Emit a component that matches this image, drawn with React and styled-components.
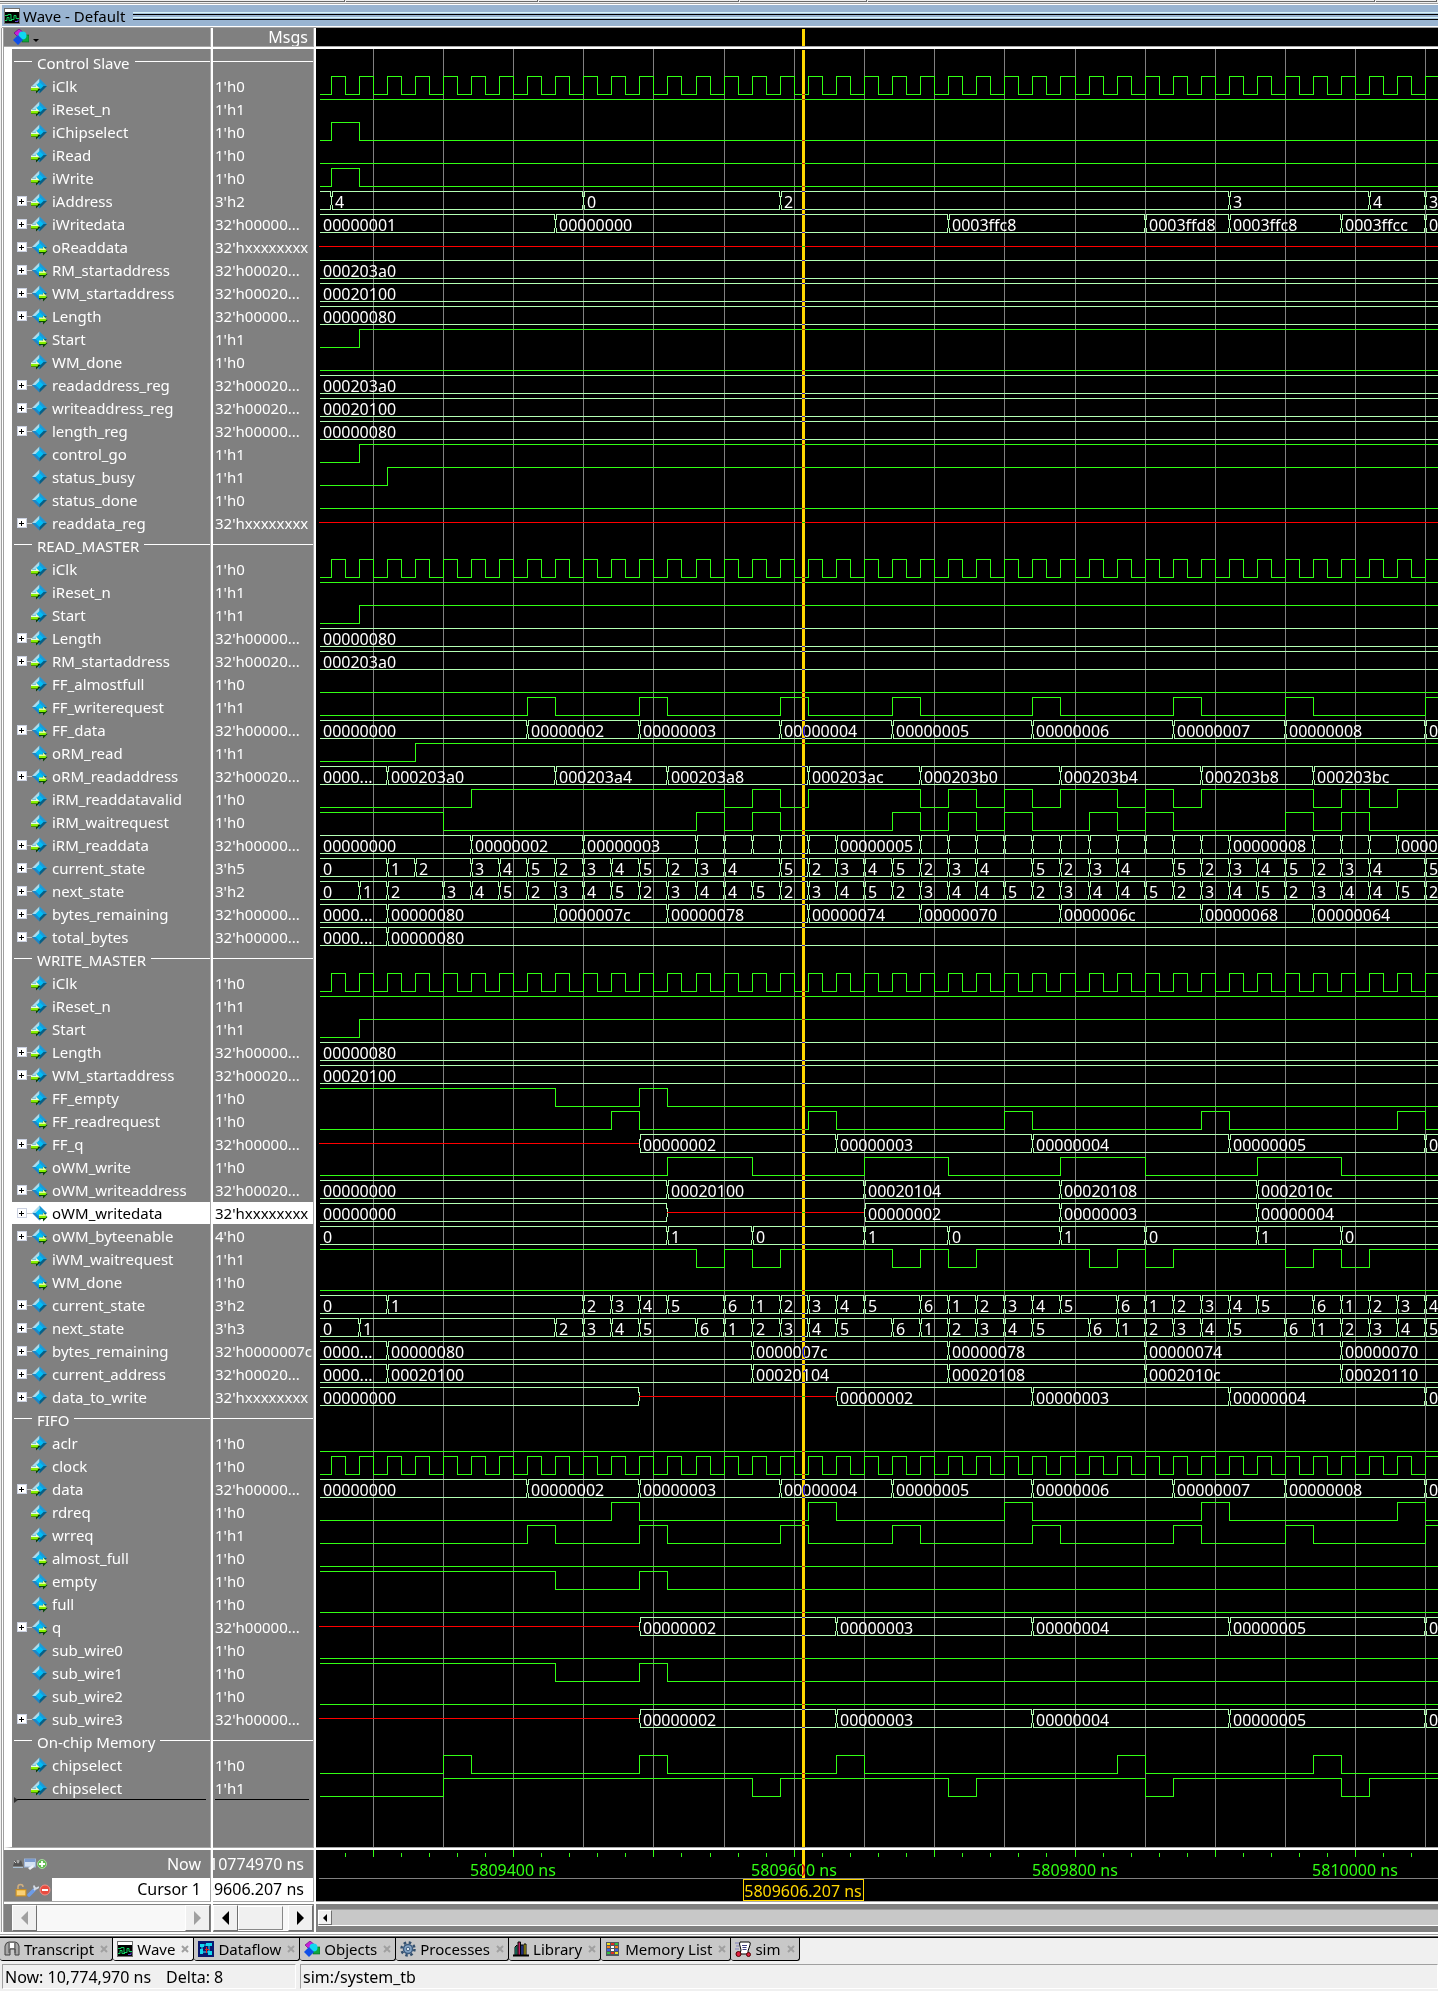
import React from "react";
import styled, { createGlobalStyle, css } from "styled-components";

const GlobalStyle = createGlobalStyle`
  * { box-sizing: border-box; }
  body {
    margin: 0;
    background: #f0f0f0;
    color: #000;
    font: 15px/22px "Noto Sans", "Open Sans", sans-serif;
  }
  button { font: inherit; color: inherit; }
  ul { list-style: none; margin: 0; padding: 0; }
`;

/* ---------- signal data ---------- */

const X = null;

// "a@270 b@290" -> [[start, a], ...]; the first entry has no time
const seq = (first, rest = "") => [
  [null, first],
  ...rest
    .split(" ")
    .filter(Boolean)
    .map((s) => {
      const [v, t] = s.split("@");
      return [Number(t), v === "x" ? X : v];
    }),
];
const bus = (first, rest) => ({ kind: "bus", segs: seq(first, rest) });
// level changes: initial level followed by the toggle times
const bit = (start, ...toggles) => ({ kind: "bit", start, toggles });

const clockEdges = Array.from({ length: 120 }, (_, i) => 270 + i * 10);
const clock = bit(0, ...clockEdges);
const low = bit(0);
const high = bit(1);

const fifoData = bus(
  "00000000",
  "00000002@410 00000003@490 00000004@590 00000005@670 00000006@770 00000007@870 00000008@950 00000009@1050"
);
const writeReq = bit(0, 410, 430, 490, 510, 590, 610, 670, 690, 770, 790, 870, 890, 950, 970, 1050, 1070);
const readReq = bit(0, 470, 490, 610, 630, 750, 770, 890, 910, 1030, 1050);
const fifoEmpty = bit(1, 430, 490, 510);
const fifoQ = bus(X, "00000002@490 00000003@630 00000004@770 00000005@910 00000006@1050");

const group = (name) => ({ name, group: true });
const sig = (name, dir, value, wave, selected) => ({ name, dir, value, wave, selected });

const ROWS = [
  group("Control Slave"),
  sig("iClk", "in", "1'h0", clock),
  sig("iReset_n", "in", "1'h1", high),
  sig("iChipselect", "in", "1'h0", bit(0, 270, 290)),
  sig("iRead", "in", "1'h0", low),
  sig("iWrite", "in", "1'h0", bit(0, 270, 290)),
  sig("iAddress", "in", "3'h2", bus("", "4@270 0@450 2@590 3@910 4@1010 3@1050")),
  sig("iWritedata", "in", "32'h00000...", bus("00000001", "00000000@430 0003ffc8@710 0003ffd8@850 0003ffc8@910 0003ffcc@990 0003ffc8@1050")),
  sig("oReaddata", "out", "32'hxxxxxxxx", bus(X)),
  sig("RM_startaddress", "out", "32'h00020...", bus("000203a0")),
  sig("WM_startaddress", "out", "32'h00020...", bus("00020100")),
  sig("Length", "out", "32'h00000...", bus("00000080")),
  sig("Start", "out", "1'h1", bit(0, 290)),
  sig("WM_done", "in", "1'h0", low),
  sig("readaddress_reg", "", "32'h00020...", bus("000203a0")),
  sig("writeaddress_reg", "", "32'h00020...", bus("00020100")),
  sig("length_reg", "", "32'h00000...", bus("00000080")),
  sig("control_go", "", "1'h1", bit(0, 290)),
  sig("status_busy", "", "1'h1", bit(0, 310)),
  sig("status_done", "", "1'h0", low),
  sig("readdata_reg", "", "32'hxxxxxxxx", bus(X)),
  group("READ_MASTER"),
  sig("iClk", "in", "1'h0", clock),
  sig("iReset_n", "in", "1'h1", high),
  sig("Start", "in", "1'h1", bit(0, 290)),
  sig("Length", "in", "32'h00000...", bus("00000080")),
  sig("RM_startaddress", "in", "32'h00020...", bus("000203a0")),
  sig("FF_almostfull", "in", "1'h0", low),
  sig("FF_writerequest", "out", "1'h1", writeReq),
  sig("FF_data", "out", "32'h00000...", fifoData),
  sig("oRM_read", "out", "1'h1", bit(0, 330)),
  sig("oRM_readaddress", "out", "32'h00020...", bus("0000...", "000203a0@310 000203a4@430 000203a8@510 000203ac@610 000203b0@690 000203b4@790 000203b8@890 000203bc@970")),
  sig("iRM_readdatavalid", "in", "1'h0", bit(0, 370, 550, 570, 590, 610, 690, 710, 730, 750, 770, 790, 830, 850, 870, 890, 970, 990, 1010, 1030)),
  sig("iRM_waitrequest", "in", "1'h0", bit(1, 350, 530, 550, 570, 590, 670, 690, 710, 730, 750, 770, 810, 830, 850, 870, 950, 970, 990, 1010)),
  sig("iRM_readdata", "in", "32'h00000...", bus("00000000", "00000002@370 00000003@450 @530 @550 @570 @590 @610 00000005@630 @690 @710 @730 @750 @770 @790 @810 @830 @850 @870 @890 00000008@910 @970 @990 @1010 00000009@1030")),
  sig("current_state", "", "3'h5", bus("0", "1@310 2@330 3@370 4@390 5@410 2@430 3@450 4@470 5@490 2@510 3@530 4@550 5@590 2@610 3@630 4@650 5@670 2@690 3@710 4@730 5@770 2@790 3@810 4@830 5@870 2@890 3@910 4@930 5@950 2@970 3@990 4@1010 5@1050")),
  sig("next_state", "", "3'h2", bus("0", "1@290 2@310 3@350 4@370 5@390 2@410 3@430 4@450 5@470 2@490 3@510 4@530 4@550 5@570 2@590 3@610 4@630 5@650 2@670 3@690 4@710 4@730 5@750 2@770 3@790 4@810 4@830 5@850 2@870 3@890 4@910 5@930 2@950 3@970 4@990 4@1010 5@1030 2@1050")),
  sig("bytes_remaining", "", "32'h00000...", bus("0000...", "00000080@310 0000007c@430 00000078@510 00000074@610 00000070@690 0000006c@790 00000068@890 00000064@970")),
  sig("total_bytes", "", "32'h00000...", bus("0000...", "00000080@310")),
  group("WRITE_MASTER"),
  sig("iClk", "in", "1'h0", clock),
  sig("iReset_n", "in", "1'h1", high),
  sig("Start", "in", "1'h1", bit(0, 290)),
  sig("Length", "in", "32'h00000...", bus("00000080")),
  sig("WM_startaddress", "in", "32'h00020...", bus("00020100")),
  sig("FF_empty", "in", "1'h0", fifoEmpty),
  sig("FF_readrequest", "out", "1'h0", readReq),
  sig("FF_q", "in", "32'h00000...", fifoQ),
  sig("oWM_write", "out", "1'h0", bit(0, 510, 570, 650, 710, 790, 850, 930, 990)),
  sig("oWM_writeaddress", "out", "32'h00020...", bus("00000000", "00020100@510 00020104@650 00020108@790 0002010c@930")),
  sig("oWM_writedata", "out", "32'hxxxxxxxx", bus("00000000", "x@510 00000002@650 00000003@790 00000004@930"), true),
  sig("oWM_byteenable", "out", "4'h0", bus("0", "1@510 0@570 1@650 0@710 1@790 0@850 1@930 0@990")),
  sig("iWM_waitrequest", "in", "1'h1", bit(1, 530, 550, 570, 590, 670, 690, 710, 730, 810, 830, 850, 870, 950, 970, 990, 1010)),
  sig("WM_done", "out", "1'h0", low),
  sig("current_state", "", "3'h2", bus("0", "1@310 2@450 3@470 4@490 5@510 6@550 1@570 2@590 3@610 4@630 5@650 6@690 1@710 2@730 3@750 4@770 5@790 6@830 1@850 2@870 3@890 4@910 5@930 6@970 1@990 2@1010 3@1030 4@1050")),
  sig("next_state", "", "3'h3", bus("0", "1@290 2@430 3@450 4@470 5@490 6@530 1@550 2@570 3@590 4@610 5@630 6@670 1@690 2@710 3@730 4@750 5@770 6@810 1@830 2@850 3@870 4@890 5@910 6@950 1@970 2@990 3@1010 4@1030 5@1050")),
  sig("bytes_remaining", "", "32'h0000007c", bus("0000...", "00000080@310 0000007c@570 00000078@710 00000074@850 00000070@990")),
  sig("current_address", "", "32'h00020...", bus("0000...", "00020100@310 00020104@570 00020108@710 0002010c@850 00020110@990")),
  sig("data_to_write", "", "32'hxxxxxxxx", bus("00000000", "x@490 00000002@630 00000003@770 00000004@910 00000005@1050")),
  group("FIFO"),
  sig("aclr", "in", "1'h0", low),
  sig("clock", "in", "1'h0", clock),
  sig("data", "in", "32'h00000...", fifoData),
  sig("rdreq", "in", "1'h0", readReq),
  sig("wrreq", "in", "1'h1", writeReq),
  sig("almost_full", "out", "1'h0", low),
  sig("empty", "out", "1'h0", fifoEmpty),
  sig("full", "out", "1'h0", low),
  sig("q", "out", "32'h00000...", fifoQ),
  sig("sub_wire0", "", "1'h0", low),
  sig("sub_wire1", "", "1'h0", fifoEmpty),
  sig("sub_wire2", "", "1'h0", low),
  sig("sub_wire3", "", "32'h00000...", fifoQ),
  group("On-chip Memory"),
  sig("chipselect", "in", "1'h0", bit(0, 350, 370, 490, 510, 630, 650, 830, 850, 970, 990)),
  sig("chipselect", "in", "1'h1", bit(0, 350, 570, 590, 710, 730, 850, 870, 990, 1010)),
];

/* ---------- wave geometry ---------- */

const ROW = 23;
const BODY_TOP = 3;
const BODY_H = 1798;
const FAR = 6000;
const px = (t) => Math.round(197.05 + (t - 400) * 1.4037);
const CURSOR_X = 486;

const GREEN = "#32ff14";
const PALE = "#b4ffb4";
const GOLD = "#ffd700";

const Svg = styled.svg`
  display: block;
  width: 100%;
  overflow: hidden;
  text {
    font: 16px "Noto Sans", "Open Sans", sans-serif;
    white-space: pre;
  }
`;
const Trace = styled.path`
  fill: none;
  stroke: ${(p) => p.$color};
  stroke-width: 1;
  shape-rendering: crispEdges;
`;
const CursorLine = styled.rect`
  fill: ${GOLD};
  mix-blend-mode: difference;
`;

function bitPath(wave, top) {
  const yHigh = top + 1.5;
  const yLow = top + 19.5;
  let level = wave.start;
  let d = `M4 ${level ? yHigh : yLow}`;
  wave.toggles.forEach((t) => {
    level = 1 - level;
    d += `H${px(t) + 0.5}V${level ? yHigh : yLow}`;
  });
  return d + `H${FAR}`;
}

function BusWave({ segs, top }) {
  const y1 = top + 1.5;
  const y2 = top + 19.5;
  const mid = top + 10.5;
  let d = "";
  let red = "";
  const labels = [];
  segs.forEach(([t, value], i) => {
    const first = i === 0;
    const last = i === segs.length - 1;
    const a = first ? 3 : px(t);
    const b = last ? FAR : px(segs[i + 1][0]);
    if (!first) d += `M${a + 0.5} ${top + 6}V${top + 15}`;
    if (value === X) {
      red += `M${a} ${mid}H${b}`;
      return;
    }
    const l = first ? a + 0.5 : a + 1.5;
    const r = b - 0.5;
    d += first ? `M${l} ${y1}` : `M${l} ${y1 + 5}V${y1}`;
    d += `H${r}V${y1 + 5}`;
    d += first ? `M${l} ${y2}` : `M${l} ${y2 - 5}V${y2}`;
    d += `H${r}V${y2 - 5}`;
    if (value) {
      labels.push(
        <text key={i} x={a + 4} y={top + 18} fill="#fff">
          {value}
        </text>
      );
    }
  });
  return (
    <g>
      <Trace $color={PALE} d={d} />
      {red && <Trace $color="#ff0000" d={red} />}
      {labels}
    </g>
  );
}

function Waves() {
  const grid = Array.from({ length: 60 }, (_, i) => `M${px(300 + i * 50) + 0.5} 0V${BODY_H}`).join("");
  return (
    <Svg height={BODY_H} role="img" aria-label="Signal waveforms">
      <Trace $color="#808080" d={grid} />
      {ROWS.map((row, i) => {
        if (row.group) return null;
        const top = BODY_TOP + i * ROW;
        return row.wave.kind === "bit" ? (
          <Trace key={i} $color={GREEN} d={bitPath(row.wave, top)} />
        ) : (
          <BusWave key={i} segs={row.wave.segs} top={top} />
        );
      })}
      <CursorLine x={CURSOR_X} y={1} width={3} height={BODY_H} />
    </Svg>
  );
}

function TimeRuler() {
  let ticks = "";
  for (let t = 280; t < 4000; t += 20) {
    ticks += t % 100 === 0 ? `M${px(t) + 0.5} 0V7` : `M${px(t) + 0.5} 3V7`;
  }
  return (
    <Svg height={51} role="img" aria-label="Timeline">
      <Trace $color={GREEN} d={ticks} />
      {[400, 600, 800, 1000, 1200, 1400].map((t) => (
        <text key={t} x={px(t)} y={26} fill={GREEN} textAnchor="middle">
          {5809000 + t} ns
        </text>
      ))}
      <CursorLine x={CURSOR_X} y={0} width={3} height={28} />
      <Trace $color="#808080" d={`M3 28.5H${FAR}`} />
      <rect x={427.5} y={29.5} width={120} height={21} fill="#000" stroke={GOLD} shapeRendering="crispEdges" />
      <text x={487} y={47} fill={GOLD} textAnchor="middle">
        5809606.207 ns
      </text>
    </Svg>
  );
}

/* ---------- icons ---------- */

const SignalSvg = styled.svg`
  flex: none;
  width: 17px;
  height: 17px;
  margin-right: 4px;
`;
const SignalIcon = ({ dir }) => (
  <SignalSvg viewBox="0 0 17 17" aria-hidden="true">
    <path d="M8.500 .5V8H1z" fill="#a9dcee" />
    <path d="M8.500 .5V8H16z" fill="#1c9ad8" />
    <path d="M1 8h7.500v7.500z" fill="#1c86c8" />
    <path d="M16 8H8.500v7.500z" fill="#075f86" />
    <path d="M8.500 4L12.500 8 8.500 12 4.500 8z" fill="#00bdf5" />
    {dir === "in" && (
      <g>
        <path d="M0 9h5V6.500L9.500 11 5 15.500V13H0z" fill="#083c08" />
        <path d="M0 8.500h5v-2L9 10.500H0z" fill="#e8fbe0" />
        <path d="M0 10h7.500L6.500 12.500H0z" fill="#8cf000" />
      </g>
    )}
    {dir === "out" && (
      <g>
        <path d="M8 10h4V7.500l4.500 4.500-4.500 4.500V14H8z" fill="#0a4a08" />
        <path d="M8 9.500h4v-2l4 4H8z" fill="#e2ff9a" />
        <path d="M8 11h7.500l-1 2H8z" fill="#86f000" />
      </g>
    )}
  </SignalSvg>
);

const Glyph = styled.svg`
  flex: none;
  width: 16px;
  height: 16px;
`;
const ObjectsIcon = () => (
  <Glyph viewBox="0 0 16 16" aria-hidden="true">
    <path d="M6 0l5 4-6 4-4-4z" fill="#c820d8" stroke="#600070" strokeWidth=".6" />
    <rect x="9" y="6" width="7" height="7" fill="#10a83c" stroke="#056020" strokeWidth=".6" />
    <circle cx="9.500" cy="6.500" r="4" fill="#10d8f0" />
    <path d="M5 6l5 5-5 5-5-5z" fill="#1050e8" />
  </Glyph>
);
const WaveIcon = () => (
  <Glyph viewBox="0 0 16 16" aria-hidden="true">
    <rect x=".5" y=".5" width="15" height="15" fill="#fff" stroke="#707070" />
    <rect x="1" y="4" width="14" height="11" fill="#000" />
    <path d="M1 7.500h3v-1h3v5h3v-4h2v3h3M1 12.500h2v-3h2v3h3" fill="none" stroke="#10d060" />
    <path d="M11 13.500h3v-2" fill="none" stroke="#6040d0" />
  </Glyph>
);
const TranscriptIcon = () => (
  <Glyph viewBox="0 0 16 16" aria-hidden="true">
    <path d="M1 14V5q1-4 4-4h6q3 0 4 4v9h-4V8H6v6z" fill="#a8a8a8" stroke="#404040" />
    <path d="M6 2h4v5H6z" fill="#fff" />
    <path d="M5 2v10M11 2v10" stroke="#505050" />
  </Glyph>
);
const DataflowIcon = () => (
  <Glyph viewBox="0 0 16 16" aria-hidden="true">
    <rect width="16" height="16" fill="#0a1870" />
    <path d="M2 3h4v3H2zM8 2h6v3H8zM2 8h3v5H2zM10 10h4v4h-4z" fill="#10d8f0" />
    <path d="M6 4h2M11 5v5M5 11h5M4 6v2" stroke="#30e8ff" />
    <path d="M7 8.500h4M8.500 6v6" stroke="#e02020" />
  </Glyph>
);
const GearIcon = () => (
  <Glyph viewBox="0 0 16 16" aria-hidden="true">
    <circle cx="8" cy="8" r="6.500" fill="none" stroke="#34506e" strokeWidth="2.500" strokeDasharray="2.500 2.600" />
    <circle cx="8" cy="8" r="4.500" fill="#88a8c8" stroke="#3c5c80" strokeWidth="1.500" />
    <circle cx="8" cy="8" r="1.800" fill="#dfe8f0" stroke="#3c5c80" />
  </Glyph>
);
const LibraryIcon = () => (
  <Glyph viewBox="0 0 16 16" aria-hidden="true">
    <path d="M0 14.500h16" stroke="#000" strokeWidth="2" />
    <path d="M2 14V6l2-2v10z" fill="#20c0a0" stroke="#000" />
    <path d="M5 14V1h2.500v13z" fill="#c02060" stroke="#000" />
    <path d="M8 14V4h2v10z" fill="#4060f0" stroke="#000" />
    <path d="M11 14V3h2v11z" fill="#f0e020" stroke="#000" />
  </Glyph>
);
const MEMORY_COLOURS = ["#f0e020", "#e03020", "#30c040", "#f08020", "#fff", "#f08020", "#4060e0", "#fff", "#4060e0", "#30c040", "#e03020", "#f0e020"];
const MemoryIcon = () => (
  <Glyph viewBox="0 0 16 16" aria-hidden="true">
    <rect x="1" y="1" width="13" height="14" fill="#505860" />
    {MEMORY_COLOURS.map((c, i) => (
      <rect key={i} x={2 + (i % 3) * 4} y={2 + Math.floor(i / 3) * 3} width="3" height="2" fill={c} />
    ))}
  </Glyph>
);
const SimIcon = () => (
  <Glyph viewBox="0 0 16 16" aria-hidden="true">
    <path d="M5 1h9q2 0 1 3l-2 6q0 2 1 3H5q2-4 0-8-1-2 0-4z" fill="#fff" stroke="#000" />
    <path d="M7 4.500h5M7.500 6.500h4M7.500 8.500h4" stroke="#404080" />
    <path d="M0 2h4M1 5h3M0 8h4" stroke="#8080c0" />
    <circle cx="3.500" cy="13" r="2.500" fill="#e02040" stroke="#500" />
    <circle cx="13.500" cy="13.500" r="2" fill="#e02040" stroke="#500" />
  </Glyph>
);

const SmallGlyph = styled.svg`
  display: block;
  width: 12px;
  height: 14px;
`;
const SnapshotIcon = () => (
  <SmallGlyph viewBox="0 0 12 14" aria-hidden="true">
    <path d="M1 9l2-6 3 4 3-4 2 6z" fill="#545454" />
    <path d="M2 4l2 2M6 3v3" stroke="#d0d0d0" />
    <path d="M1 10.500h10" stroke="#a8c0d4" strokeWidth="1" />
  </SmallGlyph>
);
const SheetIcon = () => (
  <SmallGlyph viewBox="0 0 12 14" aria-hidden="true">
    <rect x=".5" y="2" width="11" height="8" fill="#d4e2f4" stroke="#9cb4d8" />
    <rect x="1" y="2" width="10" height="3" fill="#7c9cd0" />
    <path d="M4 11l5-3 1 2-4 3z" fill="#eef2f8" />
  </SmallGlyph>
);
const PlusIcon = () => (
  <SmallGlyph viewBox="0 0 12 14" aria-hidden="true">
    <circle cx="6" cy="7" r="4.500" fill="#62bb50" stroke="#a8d8a0" />
    <path d="M6 4v6M3 7h6" stroke="#fff" strokeWidth="1.800" />
  </SmallGlyph>
);
const LockIcon = () => (
  <SmallGlyph viewBox="0 0 12 14" aria-hidden="true">
    <path d="M3 7V4q0-2.500 2.500-2.500T8 4" fill="none" stroke="#d0b080" strokeWidth="1.500" />
    <rect x="1" y="6.500" width="10" height="6.500" fill="#f4c04c" stroke="#c48c28" />
    <path d="M2 9h8M2 11h8" stroke="#fbe0a0" />
  </SmallGlyph>
);
const WrenchIcon = () => (
  <SmallGlyph viewBox="0 0 12 14" aria-hidden="true">
    <path d="M2 12L7 7" stroke="#6c9ce8" strokeWidth="3.500" strokeLinecap="round" />
    <path d="M7 7L9 5M7 2.500Q7 5.500 9.500 5.500L12 4" fill="none" stroke="#d4dce8" strokeWidth="1.800" />
  </SmallGlyph>
);
const MinusIcon = () => (
  <SmallGlyph viewBox="0 0 12 14" aria-hidden="true">
    <circle cx="6" cy="7" r="5" fill="#e84c40" stroke="#f09088" />
    <path d="M3 7h6" stroke="#fff" strokeWidth="2" />
  </SmallGlyph>
);

/* ---------- page ---------- */

const Page = styled.div`
  display: flex;
  flex-direction: column;
  min-height: 100vh;
  background: #f0f0f0;
`;
const DockEdge = styled.div`
  display: flex;
  height: 5px;
  border-bottom: 1px solid #fff;
  box-shadow: inset 0 -1px #a0a0a0;
`;
const DockSlot = styled.div`
  width: ${(p) => p.$w};
  flex: ${(p) => (p.$w ? "none" : 1)};
  height: 2px;
  border-bottom: 1px solid #696969;
  border-right: 1px solid #696969;
  margin-right: 1px;
`;
const TitleBar = styled.header`
  display: flex;
  align-items: center;
  height: 23px;
  margin-left: 2px;
  padding: 0 0 0 2px;
  background: #99b4d1;
  border-bottom: 1px solid #a0a0a0;
  box-shadow: inset 0 -1px #fff;
`;
const Title = styled.h1`
  margin: 0 8px 0 3px;
  font-size: 15px;
  font-weight: 400;
  line-height: 21px;
`;
const Grip = styled.div`
  flex: 1;
  height: 8px;
  border: solid #000;
  border-width: 0 0 1px;
  background: linear-gradient(#d8f4f8 0 1px, #a8c4dc 1px 2px, #000 2px 3px, #99b4d1 3px 5px, #d8f4f8 5px 6px, #a8c4dc 6px 7px);
`;

const Panes = styled.main`
  display: grid;
  grid-template-columns: 207px 101px minmax(0, 1fr);
  grid-template-rows: 19px auto 52px 28px;
  gap: 2px;
  margin-left: 3px;
  border-left: 1px solid #a0a0a0;
  box-shadow: -1px 0 #fff, -2px 0 #a0a0a0;
  background: #fff;
`;
const cell = css`
  min-width: 0;
  overflow: hidden;
  border-right: 1px solid #a8a8a8;
  border-bottom: 1px solid #a8a8a8;
  background: #808080;
  color: #fff;
`;
const HeadCell = styled.div`
  ${cell}
  display: flex;
  align-items: flex-start;
  justify-content: ${(p) => (p.$end ? "flex-end" : "flex-start")};
  padding: 0 5px 0 9px;
  font-size: ${(p) => (p.$end ? "16px" : "15px")};
  line-height: 18px;
`;
const WaveCell = styled.div`
  ${cell}
  border-right: 0;
  background: #000;
`;
const ColumnMenu = styled.button`
  display: flex;
  align-items: flex-end;
  gap: 4px;
  height: 18px;
  padding: 1px 0;
  border: 0;
  background: none;
`;
const Caret = styled.span`
  margin-bottom: 3px;
  border: solid transparent;
  border-width: 3px 3px 0;
  border-top-color: #000;
`;
const NamesCell = styled.div`
  ${cell}
  padding-top: 3px;
  border-left: 8px solid #fff;
`;
const ValuesCell = styled.div`
  ${cell}
  padding-top: 3px;
`;
const SignalRow = styled.li`
  display: flex;
  align-items: center;
  height: 22px;
  margin-bottom: 1px;
  padding-left: ${(p) => (p.$value ? "2px" : "5px")};
  white-space: nowrap;
  background: ${(p) => (p.$selected ? "#fff" : "transparent")};
  color: ${(p) => (p.$selected ? "#000" : "#fff")};
`;
const GroupRow = styled.li`
  display: flex;
  align-items: flex-start;
  gap: 5px;
  height: 22px;
  margin-bottom: 1px;
  padding-left: ${(p) => (p.$value ? 0 : "2px")};
  white-space: nowrap;
`;
const Rule = styled.span`
  flex: ${(p) => (p.$lead ? "none" : 1)};
  width: 18px;
  height: 1px;
  margin-top: 9px;
  background: #fff;
`;
const Expander = styled.button`
  flex: none;
  width: 10px;
  height: 10px;
  padding: 0;
  border: 0;
  box-shadow: inset 0 0 0 1px #ccd2e2;
  background: linear-gradient(#000, #000) 2px 5px / 5px 1px no-repeat, linear-gradient(#000, #000) 4px 3px / 1px 5px no-repeat,
    #fff;
`;
const Stem = styled.span`
  flex: none;
  width: 5px;
  height: 1px;
  margin-right: -1px;
  background: #c8c8c8;
`;
const Blank = styled.span`
  flex: none;
  width: 14px;
`;
const InsertMark = styled.div`
  display: flex;
  align-items: center;
  height: 1px;
  margin: -1px 4px 0 2px;
  background: #000;
  &::before {
    content: "";
    display: ${(p) => (p.$arrow ? "block" : "none")};
    border: solid transparent;
    border-width: 3px 0 3px 4px;
    border-left-color: #303030;
  }
`;

const RulerCell = styled.div`
  ${cell}
  font-size: 16px;
`;
const RulerRow = styled.div`
  display: flex;
  height: ${(p) => (p.$cursor ? "23px" : "28px")};
  line-height: ${(p) => (p.$cursor ? "23px" : "28px")};
`;
const Tools = styled.div`
  display: flex;
  align-items: center;
  flex: none;
  width: 48px;
  padding-left: ${(p) => (p.$indent ? "11px" : "8px")};
`;
const ToolButton = styled.button`
  padding: 0;
  border: 0;
  background: none;
`;
const RulerText = styled.div`
  flex: 1;
  min-width: 0;
  display: flex;
  justify-content: flex-end;
  overflow: hidden;
  padding-right: 9px;
  white-space: nowrap;
  background: ${(p) => (p.$active ? "#fff" : "transparent")};
  color: ${(p) => (p.$active ? "#000" : "#fff")};
`;

const ScrollCell = styled.div`
  display: flex;
  min-width: 0;
  padding: 1px ${(p) => (p.$wave ? 0 : 1)}px 1px ${(p) => (p.$names ? 8 : 0)}px;
  background: #808080;
  ${(p) => p.$wave && "padding: 5px 0 6px 2px;"}
`;
const Track = styled.div`
  flex: 1;
  display: flex;
  background: ${(p) => (p.$flat ? "#c8c8c8" : "#f8f8f8")};
  border: solid ${(p) => (p.$flat ? "#a0a0a0" : "#f8f8f8")};
  border-width: 1px 0;
  border-bottom-color: #fff;
`;
const Thumb = styled.div`
  width: 45px;
  background: #f0f0f0;
  border: 1px solid #fff;
  border-right-color: #888;
  border-bottom-color: #888;
`;
const ArrowButton = styled.button`
  flex: none;
  display: flex;
  align-items: center;
  justify-content: center;
  width: ${(p) => (p.$small ? "14px" : "25px")};
  padding: 0;
  background: #f0f0f0;
  border: 1px solid #fff;
  border-right-color: #707070;
  border-bottom-color: #707070;
  &::before {
    content: "";
    border: solid transparent;
    border-width: ${(p) => (p.$small ? "4px 4px" : "7px 7px")};
    ${(p) =>
      p.$dir === "left"
        ? css`border-left-width: 0; border-right-color: ${p.disabled ? "#a0a0a0" : "#000"};`
        : css`border-right-width: 0; border-left-color: ${p.disabled ? "#a0a0a0" : "#000"};`}
  }
`;

const PaneFoot = styled.div`
  height: 6px;
  background: linear-gradient(#fff 0 2px, #a0a0a0 2px 3px, #fff 3px 4px, #696969 4px 5px, #000 5px 6px);
`;
const TabStrip = styled.nav`
  display: flex;
  height: 26px;
`;
const Tab = styled.div`
  display: flex;
  align-items: center;
  height: 23px;
  padding: 0 4px;
  background: ${(p) => (p.$active ? "#f0f0f0" : "#c8c8c8")};
  border: solid #000;
  border-width: 0 1px 1px 0;
  border-radius: 0 0 3px 3px;
`;
const TabButton = styled.button`
  display: flex;
  align-items: center;
  gap: 4px;
  padding: 0;
  border: 0;
  background: none;
  line-height: 20px;
  white-space: nowrap;
`;
const TabClose = styled.button`
  width: 8px;
  height: 8px;
  margin-left: 6px;
  padding: 0;
  border: 0;
  background: none;
  svg { display: block; }
`;

const StatusBar = styled.footer`
  display: flex;
  gap: 4px;
  height: 27px;
  padding: 0 0 2px 2px;
  font-size: 16px;
`;
const StatusBox = styled.div`
  flex: ${(p) => (p.$wide ? 1 : "none")};
  width: 294px;
  display: flex;
  gap: 15px;
  padding-left: 2px;
  border: 1px solid #a0a0a0;
  border-right-color: #fff;
  border-bottom-color: #fff;
  line-height: 24px;
  white-space: nowrap;
`;

const TABS = [
  ["Transcript", TranscriptIcon],
  ["Wave", WaveIcon],
  ["Dataflow", DataflowIcon],
  ["Objects", ObjectsIcon],
  ["Processes", GearIcon],
  ["Library", LibraryIcon],
  ["Memory List", MemoryIcon],
  ["sim", SimIcon],
];

function NameRow({ row }) {
  if (row.group) {
    return (
      <GroupRow>
        <Rule $lead />
        {row.name}
        <Rule />
      </GroupRow>
    );
  }
  return (
    <SignalRow $selected={row.selected}>
      {row.wave.kind === "bus" ? (
        <>
          <Expander aria-label={`Expand ${row.name}`} />
          <Stem />
        </>
      ) : (
        <Blank />
      )}
      <SignalIcon dir={row.dir} />
      {row.name}
    </SignalRow>
  );
}

export default function App() {
  return (
    <Page>
      <GlobalStyle />
      <DockEdge>
        <DockSlot $w="345px" />
        <DockSlot $w="192px" />
        <DockSlot $w="200px" />
        <DockSlot $w="127px" />
        <DockSlot $w="507px" />
        <DockSlot />
      </DockEdge>
      <TitleBar>
        <WaveIcon />
        <Title>Wave - Default</Title>
        <Grip />
      </TitleBar>
      <Panes>
        <HeadCell>
          <ColumnMenu aria-label="Columns">
            <ObjectsIcon />
            <Caret />
          </ColumnMenu>
        </HeadCell>
        <HeadCell $end>Msgs</HeadCell>
        <WaveCell>
          <Svg height={18} aria-hidden="true">
            <CursorLine x={CURSOR_X} y={1} width={3} height={17} />
          </Svg>
        </WaveCell>

        <NamesCell>
          <ul>
            {ROWS.map((row, i) => (
              <NameRow key={i} row={row} />
            ))}
          </ul>
          <InsertMark $arrow />
        </NamesCell>
        <ValuesCell>
          <ul>
            {ROWS.map((row, i) =>
              row.group ? (
                <GroupRow key={i} $value>
                  <Rule />
                </GroupRow>
              ) : (
                <SignalRow key={i} $value $selected={row.selected}>
                  {row.value}
                </SignalRow>
              )
            )}
          </ul>
          <InsertMark />
        </ValuesCell>
        <WaveCell>
          <Waves />
        </WaveCell>

        <RulerCell>
          <RulerRow>
            <Tools>
              <ToolButton aria-label="Snapshot"><SnapshotIcon /></ToolButton>
              <ToolButton aria-label="Timeline settings"><SheetIcon /></ToolButton>
              <ToolButton aria-label="Add cursor"><PlusIcon /></ToolButton>
            </Tools>
            <RulerText>Now</RulerText>
          </RulerRow>
          <RulerRow $cursor>
            <Tools $indent>
              <ToolButton aria-label="Lock cursor"><LockIcon /></ToolButton>
              <ToolButton aria-label="Edit cursor"><WrenchIcon /></ToolButton>
              <ToolButton aria-label="Remove cursor"><MinusIcon /></ToolButton>
            </Tools>
            <RulerText $active>Cursor 1</RulerText>
          </RulerRow>
        </RulerCell>
        <RulerCell>
          <RulerRow>
            <RulerText>10774970 ns</RulerText>
          </RulerRow>
          <RulerRow $cursor>
            <RulerText $active>5809606.207 ns</RulerText>
          </RulerRow>
        </RulerCell>
        <WaveCell>
          <TimeRuler />
        </WaveCell>

        <ScrollCell $names>
          <ArrowButton $dir="left" disabled aria-label="Scroll names left" />
          <Track />
          <ArrowButton $dir="right" disabled aria-label="Scroll names right" />
        </ScrollCell>
        <ScrollCell>
          <ArrowButton $dir="left" aria-label="Scroll values left" />
          <Track>
            <Thumb />
          </Track>
          <ArrowButton $dir="right" aria-label="Scroll values right" />
        </ScrollCell>
        <ScrollCell $wave>
          <Track $flat>
            <ArrowButton $small $dir="left" aria-label="Scroll waves left" />
          </Track>
        </ScrollCell>
      </Panes>
      <PaneFoot />
      <TabStrip>
        {TABS.map(([name, Icon]) => (
          <Tab key={name} $active={name === "Wave"}>
            <TabButton>
              <Icon />
              {name}
            </TabButton>
            <TabClose aria-label={`Close ${name}`}>
              <svg width="8" height="8" viewBox="0 0 8 8" aria-hidden="true">
                <path d="M1 1l6 6M7 1L1 7" stroke="#a0a0a0" strokeWidth="2" />
              </svg>
            </TabClose>
          </Tab>
        ))}
      </TabStrip>
      <StatusBar>
        <StatusBox>
          <span>Now: 10,774,970 ns</span>
          <span>Delta: 8</span>
        </StatusBox>
        <StatusBox $wide>sim:/system_tb</StatusBox>
      </StatusBar>
    </Page>
  );
}
